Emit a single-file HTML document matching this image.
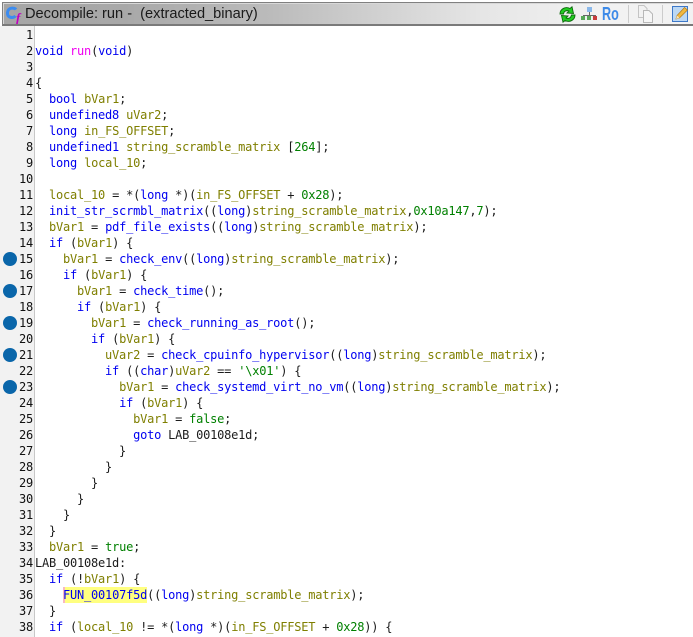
<!DOCTYPE html>
<html><head><meta charset="utf-8">
<style>
html,body{margin:0;padding:0;background:#fff;}
#p{position:relative;width:693px;height:637px;overflow:hidden;background:#fff;}
#hdr{position:absolute;left:2px;top:2px;width:691px;height:24px;box-sizing:border-box;border-top:1px solid #808080;border-left:1px solid #808080;border-bottom:2px solid #7a7a7a;background:linear-gradient(90deg,#a5a5a5 0,#a8a8a8 120px,#bbbbbb 268px,#e6e6e6 480px,#f2f2f2 600px);box-shadow:inset 1px 1px 0 #d8d8d8;}
#ttl{position:absolute;left:25px;top:5px;font:14.6px/18px "Liberation Sans",sans-serif;color:#1a1a1a;white-space:pre;}
#gut{position:absolute;left:0;top:26px;width:34px;height:611px;background:#f2f2f2;border-right:1px solid #c8c8c8;}
.n{position:absolute;left:0;width:33px;text-align:right;font:12px/16px "DejaVu Sans Mono",monospace;color:#111;letter-spacing:-0.22px;}
.l{position:absolute;left:35px;font:12px/16px "DejaVu Sans Mono",monospace;color:#1c1c1c;white-space:pre;letter-spacing:-0.22px;}
.k{color:#0000f0;}.v{color:#7f7f00;}.f{color:#0000f0;}.c{color:#008000;}.m{color:#f000f0;}
.d{position:absolute;left:3px;width:14px;height:14px;border-radius:50%;background:#0a66aa;}
#hl{position:absolute;left:63px;top:587px;width:84px;height:16px;background:#ffff80;}
#cur{position:absolute;left:63px;top:587px;width:2px;height:16px;background:#f8b8c0;}
</style></head><body><div id="p">
<div id="hdr"></div>
<svg style="position:absolute;left:5px;top:5px" width="18" height="19" viewBox="0 0 18 19"><path d="M11 4.5C9.5 2.5 3 2 2.5 7.5S8 13.5 10.5 11" fill="none" stroke="#3c8cf0" stroke-width="3"/><text x="11" y="17" font-family="Liberation Serif,serif" font-style="italic" font-weight="bold" font-size="13" fill="#c000c0">f</text></svg>
<div id="ttl">Decompile: run -  (extracted_binary)</div>
<svg style="position:absolute;left:559px;top:6px" width="17" height="17" viewBox="0 0 17 17"><path d="M1 8C1 3 6.5 0 11 2.5L13 .8L14.5 7.5L8 7L10 5C7.5 4 5 5 4.5 8Z" fill="#22cc22" stroke="#0c6a0c" stroke-width=".9"/><path d="M16 9C16 14 10.5 17 6 14.5L4 16.2L2.5 9.5L9 10L7 12C9.5 13 12 12 12.5 9Z" fill="#22cc22" stroke="#0c6a0c" stroke-width=".9"/></svg>
<svg style="position:absolute;left:581px;top:7px" width="16" height="13" viewBox="0 0 16 13"><path d="M8.5 5V9M2.5 11V8.5H14.5V11M8.5 9V11" stroke="#666" fill="none"/><rect x="6" y="0" width="5" height="5" fill="#8ab8ea"/><rect x="0" y="9" width="4" height="4" fill="#58a858"/><rect x="6" y="9" width="4" height="4" fill="#58a858"/><rect x="12" y="9" width="4" height="4" fill="#c83c3c"/></svg>
<div style="position:absolute;left:602px;top:4px;width:24px;font:bold 18px/20px 'Liberation Sans',sans-serif;color:#3d8ae8;transform:scaleX(.7);transform-origin:0 0">Ro</div>
<div style="position:absolute;left:628px;top:5px;width:1px;height:18px;background:#ccc"></div>
<svg style="position:absolute;left:637px;top:5px" width="17" height="18" viewBox="0 0 17 18"><path d="M1.5 .5H7L10 3.5V12.5H1.5Z" fill="#f2f2f2" stroke="#c4c4c4"/><path d="M6.5 5.5H12L15.5 9V17.5H6.5Z" fill="#f6f6f6" stroke="#b8b8b8"/></svg>
<div style="position:absolute;left:662px;top:5px;width:1px;height:18px;background:#ccc"></div>
<svg style="position:absolute;left:672px;top:5px" width="17" height="18" viewBox="0 0 17 18"><rect x=".5" y="1.5" width="15" height="15" fill="#bcd8f4" stroke="#3d78c8"/><path d="M4 14L5 10.5L12.5 2.5L15.5 5L7.5 13Z" fill="#f0b840" stroke="#b07818" stroke-width=".7"/><path d="M4 14L5 10.5L7.5 13Z" fill="#f4e4c0"/></svg>
<div id="gut"></div>
<div class="d" style="top:252px"></div><div class="d" style="top:284px"></div><div class="d" style="top:316px"></div><div class="d" style="top:348px"></div><div class="d" style="top:380px"></div>
<div id="hl"></div><div id="cur"></div>
<div class="n" style="top:27px">1</div><div class="n" style="top:43px">2</div><div class="n" style="top:59px">3</div><div class="n" style="top:75px">4</div><div class="n" style="top:91px">5</div><div class="n" style="top:107px">6</div><div class="n" style="top:123px">7</div><div class="n" style="top:139px">8</div><div class="n" style="top:155px">9</div><div class="n" style="top:171px">10</div><div class="n" style="top:187px">11</div><div class="n" style="top:203px">12</div><div class="n" style="top:219px">13</div><div class="n" style="top:235px">14</div><div class="n" style="top:251px">15</div><div class="n" style="top:267px">16</div><div class="n" style="top:283px">17</div><div class="n" style="top:299px">18</div><div class="n" style="top:315px">19</div><div class="n" style="top:331px">20</div><div class="n" style="top:347px">21</div><div class="n" style="top:363px">22</div><div class="n" style="top:379px">23</div><div class="n" style="top:395px">24</div><div class="n" style="top:411px">25</div><div class="n" style="top:427px">26</div><div class="n" style="top:443px">27</div><div class="n" style="top:459px">28</div><div class="n" style="top:475px">29</div><div class="n" style="top:491px">30</div><div class="n" style="top:507px">31</div><div class="n" style="top:523px">32</div><div class="n" style="top:539px">33</div><div class="n" style="top:555px">34</div><div class="n" style="top:571px">35</div><div class="n" style="top:587px">36</div><div class="n" style="top:603px">37</div><div class="n" style="top:619px">38</div>
<div class="l" style="top:43px"><span class="k">void</span> <span class="m">run</span>(<span class="k">void</span>)</div>
<div class="l" style="top:75px">{</div>
<div class="l" style="top:91px">  <span class="k">bool</span> <span class="v">bVar1</span>;</div>
<div class="l" style="top:107px">  <span class="k">undefined8</span> <span class="v">uVar2</span>;</div>
<div class="l" style="top:123px">  <span class="k">long</span> <span class="v">in_FS_OFFSET</span>;</div>
<div class="l" style="top:139px">  <span class="k">undefined1</span> <span class="v">string_scramble_matrix</span> [<span class="c">264</span>];</div>
<div class="l" style="top:155px">  <span class="k">long</span> <span class="v">local_10</span>;</div>
<div class="l" style="top:187px">  <span class="v">local_10</span> = *(<span class="k">long</span> *)(<span class="v">in_FS_OFFSET</span> + <span class="c">0x28</span>);</div>
<div class="l" style="top:203px">  <span class="f">init_str_scrmbl_matrix</span>((<span class="k">long</span>)<span class="v">string_scramble_matrix</span>,<span class="c">0x10a147</span>,<span class="c">7</span>);</div>
<div class="l" style="top:219px">  <span class="v">bVar1</span> = <span class="f">pdf_file_exists</span>((<span class="k">long</span>)<span class="v">string_scramble_matrix</span>);</div>
<div class="l" style="top:235px">  <span class="k">if</span> (<span class="v">bVar1</span>) {</div>
<div class="l" style="top:251px">    <span class="v">bVar1</span> = <span class="f">check_env</span>((<span class="k">long</span>)<span class="v">string_scramble_matrix</span>);</div>
<div class="l" style="top:267px">    <span class="k">if</span> (<span class="v">bVar1</span>) {</div>
<div class="l" style="top:283px">      <span class="v">bVar1</span> = <span class="f">check_time</span>();</div>
<div class="l" style="top:299px">      <span class="k">if</span> (<span class="v">bVar1</span>) {</div>
<div class="l" style="top:315px">        <span class="v">bVar1</span> = <span class="f">check_running_as_root</span>();</div>
<div class="l" style="top:331px">        <span class="k">if</span> (<span class="v">bVar1</span>) {</div>
<div class="l" style="top:347px">          <span class="v">uVar2</span> = <span class="f">check_cpuinfo_hypervisor</span>((<span class="k">long</span>)<span class="v">string_scramble_matrix</span>);</div>
<div class="l" style="top:363px">          <span class="k">if</span> ((<span class="k">char</span>)<span class="v">uVar2</span> == <span class="c">'\x01'</span>) {</div>
<div class="l" style="top:379px">            <span class="v">bVar1</span> = <span class="f">check_systemd_virt_no_vm</span>((<span class="k">long</span>)<span class="v">string_scramble_matrix</span>);</div>
<div class="l" style="top:395px">            <span class="k">if</span> (<span class="v">bVar1</span>) {</div>
<div class="l" style="top:411px">              <span class="v">bVar1</span> = <span class="c">false</span>;</div>
<div class="l" style="top:427px">              <span class="k">goto</span> LAB_00108e1d;</div>
<div class="l" style="top:443px">            }</div>
<div class="l" style="top:459px">          }</div>
<div class="l" style="top:475px">        }</div>
<div class="l" style="top:491px">      }</div>
<div class="l" style="top:507px">    }</div>
<div class="l" style="top:523px">  }</div>
<div class="l" style="top:539px">  <span class="v">bVar1</span> = <span class="c">true</span>;</div>
<div class="l" style="top:555px">LAB_00108e1d:</div>
<div class="l" style="top:571px">  <span class="k">if</span> (!<span class="v">bVar1</span>) {</div>
<div class="l" style="top:587px">    <span class="f">FUN_00107f5d</span>((<span class="k">long</span>)<span class="v">string_scramble_matrix</span>);</div>
<div class="l" style="top:603px">  }</div>
<div class="l" style="top:619px">  <span class="k">if</span> (<span class="v">local_10</span> != *(<span class="k">long</span> *)(<span class="v">in_FS_OFFSET</span> + <span class="c">0x28</span>)) {</div>
</div></body></html>
